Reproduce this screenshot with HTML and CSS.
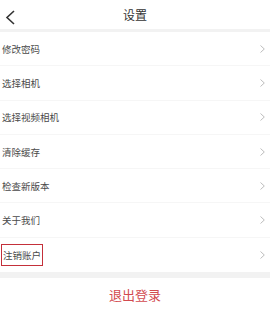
FILE: index.html
```html
<!DOCTYPE html>
<html>
	<head>
		<meta charset="utf-8" />
		<meta name="viewport" content="width=device-width, initial-scale=1.0" />
		<title>设置</title>
		<link rel="stylesheet" href="styles.css">
	</head>
	<body>
		<!-- 顶部 -->
		<div class="header">
			<div class="back">
				<svg width="12" height="15" viewBox="0 0 12 15"><path d="M10 1 L3 7.5 L10 14" fill="none" stroke="#333" stroke-width="1.6"/></svg>
			</div>
			<div class="title">设置</div>
		</div>
		<!-- 列表 -->
		<div class="list">
			<div class="item"><span>修改密码</span><svg class="arrow" viewBox="0 0 5 8"><path d="M0.5 0.5 L4.3 4 L0.5 7.5" fill="none" stroke="#b5b5b5" stroke-width="0.9"/></svg></div>
			<div class="item"><span>选择相机</span><svg class="arrow" viewBox="0 0 5 8"><path d="M0.5 0.5 L4.3 4 L0.5 7.5" fill="none" stroke="#b5b5b5" stroke-width="0.9"/></svg></div>
			<div class="item"><span>选择视频相机</span><svg class="arrow" viewBox="0 0 5 8"><path d="M0.5 0.5 L4.3 4 L0.5 7.5" fill="none" stroke="#b5b5b5" stroke-width="0.9"/></svg></div>
			<div class="item"><span>清除缓存</span><svg class="arrow" viewBox="0 0 5 8"><path d="M0.5 0.5 L4.3 4 L0.5 7.5" fill="none" stroke="#b5b5b5" stroke-width="0.9"/></svg></div>
			<div class="item"><span>检查新版本</span><svg class="arrow" viewBox="0 0 5 8"><path d="M0.5 0.5 L4.3 4 L0.5 7.5" fill="none" stroke="#b5b5b5" stroke-width="0.9"/></svg></div>
			<div class="item"><span>关于我们</span><svg class="arrow" viewBox="0 0 5 8"><path d="M0.5 0.5 L4.3 4 L0.5 7.5" fill="none" stroke="#b5b5b5" stroke-width="0.9"/></svg></div>
			<div class="item"><span class="mark">注销账户</span><svg class="arrow" viewBox="0 0 5 8"><path d="M0.5 0.5 L4.3 4 L0.5 7.5" fill="none" stroke="#b5b5b5" stroke-width="0.9"/></svg></div>
		</div>
		<!-- 退出 -->
		<div class="logout">退出登录</div>
	</body>
</html>
```

FILE: styles.css
```css
html,
body {
	margin: 0;
	padding: 0;
	background: #fff;
	font-family: "Noto Sans CJK SC", "Noto Sans", sans-serif;
}
.header
{
	height: 29px;
	display: flex;
	align-items: center;
	justify-content: center;
	position: relative;
	border-bottom: 3px solid #f2f2f2;
}
.back
{
	position: absolute;
	left: 4px;
	top: 6px;
	height: 15px;
}
.title
{
	font-size: 12px;
	color: #333;
}
.list
{
	border-bottom: 6px solid #f2f2f2;
}
.item
{
	height: 34.3px;
	display: flex;
	align-items: center;
	justify-content: space-between;
	padding: 0 5px 0 2px;
	box-sizing: border-box;
	border-bottom: 1px solid #f6f6f6;
	font-size: 9.5px;
	color: #4a4a4a;
}
.item:last-child
{
	border-bottom: none;
}
.mark
{
	border: 1px solid #c4303a;
	padding: 3px 1px;
	margin-left: -1px;
}
.arrow
{
	width: 5px;
	height: 8px;
}
.logout
{
	height: 33px;
	display: flex;
	align-items: center;
	justify-content: center;
	font-size: 13px;
	color: #d24a4f;
	border-bottom: 2px solid #eee;
}
```
